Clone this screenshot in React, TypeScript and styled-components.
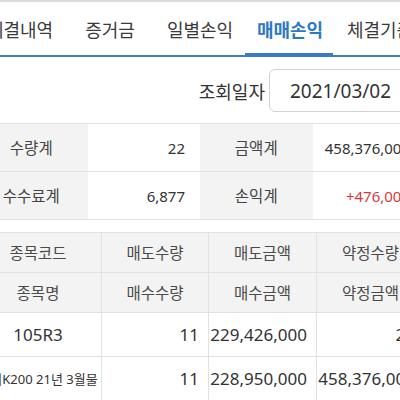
import React from "react";
import styled, { createGlobalStyle, css } from "styled-components";

const GlobalStyle = createGlobalStyle`
  html, body { margin: 0; padding: 0; background: #ffffff; overflow: hidden; }
  body { font-family: "Noto Sans", "Noto Sans CJK KR", sans-serif; color: #333; }
`;

const Page = styled.div`
  width: 450px;
  margin-left: -25px;
`;

const TabBar = styled.nav`
  display: flex;
  height: 53px;
  border-top: 2px solid #dcdcdc;
  border-bottom: 2px solid #3f80c6;
  white-space: nowrap;
`;

const Tab = styled.div<{ $active?: boolean }>`
  position: relative;
  display: flex;
  align-items: center;
  justify-content: center;
  flex: none;
  width: 90px;
  font-size: 18px;
  color: ${(p) => (p.$active ? "#2c78c2" : "#3a3a3a")};
  font-weight: ${(p) => (p.$active ? 700 : 400)};
  ${(p) =>
    p.$active &&
    css`
      &::after {
        content: "";
        position: absolute;
        left: 0;
        right: 2px;
        bottom: -2px;
        height: 4px;
        background: #3a7cc3;
      }
    `}
`;

const DateRow = styled.div`
  display: flex;
  justify-content: flex-end;
  align-items: center;
  gap: 4px;
  padding: 12px 8px 11px 0;
`;

const DateLabel = styled.span`
  font-size: 18px;
  color: #333;
`;

const DateBox = styled.div`
  box-sizing: border-box;
  width: 148px;
  height: 43px;
  display: flex;
  align-items: center;
  padding-left: 20px;
  border: 1px solid #d2d2d2;
  border-radius: 6px;
  font-size: 19px;
  color: #333;
`;

const Summary = styled.div`
  display: grid;
  grid-template-columns: repeat(4, 1fr);
  border-top: 1px solid #e2e2e2;
`;

const SumCell = styled.div<{ $label?: boolean; $red?: boolean }>`
  height: 47px;
  display: flex;
  align-items: center;
  border-bottom: 1px solid #e2e2e2;
  white-space: nowrap;
  ${(p) =>
    p.$label
      ? css`
          justify-content: center;
          background: #f3f3f3;
          color: #444;
          font-size: 15.5px;
        `
      : css`
          justify-content: flex-end;
          padding-right: 15px;
          background: #fff;
          font-size: 15px;
          color: ${p.$red ? "#d63a41" : "#333"};
        `}
`;

const Grid = styled.div`
  margin-top: 12px;
  display: grid;
  grid-template-columns: 127px 107px 108px 108px;
  border-top: 1px solid #e2e2e2;
`;

const GridCell = styled.div<{
  $head?: boolean;
  $num?: boolean;
  $small?: boolean;
}>`
  box-sizing: border-box;
  height: ${(p) => (p.$head ? "40px" : "44px")};
  display: flex;
  align-items: center;
  justify-content: ${(p) => (p.$num ? "flex-end" : "center")};
  padding-right: ${(p) => (p.$num ? "9px" : "0")};
  border-bottom: 1px solid #e2e2e2;
  border-right: 1px solid #e2e2e2;
  background: ${(p) => (p.$head ? "#f3f3f3" : "#fff")};
  color: ${(p) => (p.$head ? "#4a4a4a" : "#333")};
  font-size: ${(p) => (p.$head ? "15.5px" : p.$small ? "13px" : "17px")};
  white-space: nowrap;
`;

const tabs = ["체결내역", "증거금", "일별손익", "매매손익", "체결기준"];

export default function App() {
  return (
    <>
      <GlobalStyle />
      <Page>
        <TabBar>
          {tabs.map((t) => (
            <Tab key={t} $active={t === "매매손익"}>
              {t}
            </Tab>
          ))}
        </TabBar>
        <DateRow>
          <DateLabel>조회일자</DateLabel>
          <DateBox>2021/03/02</DateBox>
        </DateRow>
        <Summary>
          <SumCell $label>수량계</SumCell>
          <SumCell>22</SumCell>
          <SumCell $label>금액계</SumCell>
          <SumCell>458,376,000</SumCell>
          <SumCell $label>수수료계</SumCell>
          <SumCell>6,877</SumCell>
          <SumCell $label>손익계</SumCell>
          <SumCell $red>+476,000</SumCell>
        </Summary>
        <Grid>
          <GridCell $head>종목코드</GridCell>
          <GridCell $head>매도수량</GridCell>
          <GridCell $head>매도금액</GridCell>
          <GridCell $head>약정수량</GridCell>
          <GridCell $head>종목명</GridCell>
          <GridCell $head>매수수량</GridCell>
          <GridCell $head>매수금액</GridCell>
          <GridCell $head>약정금액</GridCell>
          <GridCell>105R3</GridCell>
          <GridCell $num>11</GridCell>
          <GridCell $num>229,426,000</GridCell>
          <GridCell $num>22</GridCell>
          <GridCell $small>미니K200 21년 3월물</GridCell>
          <GridCell $num>11</GridCell>
          <GridCell $num>228,950,000</GridCell>
          <GridCell $num>458,376,000</GridCell>
        </Grid>
      </Page>
    </>
  );
}
